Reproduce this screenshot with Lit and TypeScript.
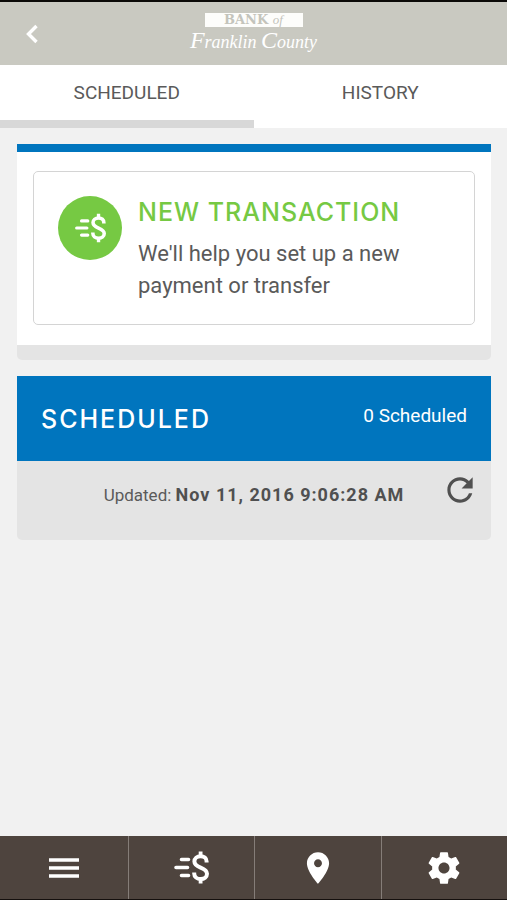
import { LitElement, html, css, svg } from "lit";
import { customElement, state } from "lit/decorators.js";

const transferGlyph = svg`
  <g fill="none" stroke="currentColor">
    <g stroke-width="3.6">
      <path d="M7.5 8.500H14.500M2 16.500H13.500M7.500 24.500H14.500" stroke-linecap="round" />
    </g>
    <path stroke-width="4" d="M32.600 11.500V10.500C32.600 7.200 30 5.200 26.600 5.200C23 5.200 20.400 7.400 20.400 10.400C20.400 13.600 22.800 15 26.600 16.600C30.600 18.200 33 19.600 33 22.800C33 26 30.200 28 26.800 28C23 28 20.200 25.800 20.200 22.400V21.500" />
    <path stroke-width="3.8" d="M26.600 0.500V5.500M26.600 27.500V32.500" />
  </g>`;

@customElement("app-root")
export class AppRoot extends LitElement {
  @state() private tab: "scheduled" | "history" = "scheduled";

  static styles = css`
    :host {
      display: flex;
      flex-direction: column;
      min-height: 100vh;
      box-sizing: border-box;
      border-top: 2px solid #0b0a08;
      border-bottom: 1px solid #15100e;
      background: #f1f1f1;
      color: #5a5a5a;
      font-family: Roboto, "Liberation Sans", sans-serif;
    }
    * {
      box-sizing: border-box;
    }
    button {
      margin: 0;
      padding: 0;
      border: 0;
      background: none;
      color: inherit;
      font: inherit;
      cursor: pointer;
    }
    svg {
      display: block;
    }
    h2 {
      margin: 0;
      font: 500 25px/32px Inter, sans-serif;
      letter-spacing: 1px;
    }
    .bar {
      display: grid;
      grid-template-columns: 64px 1fr 64px;
      align-items: center;
      height: 63px;
      background: #c9c9c1;
      color: #fff;
    }
    .back {
      display: flex;
      justify-content: center;
      align-items: center;
      height: 60px;
    }
    .logo {
      display: flex;
      flex-direction: column;
      align-items: center;
      font-family: "Liberation Serif", serif;
      white-space: nowrap;
    }
    .plate {
      width: 98px;
      height: 14px;
      background: #fdfdfb;
      color: #c4c4bc;
      font: 700 13px/14px "DejaVu Serif", serif;
      text-align: center;
    }
    .plate i {
      font: italic 400 13px/14px "Liberation Serif", serif;
    }
    .script {
      font-size: 18px;
      line-height: 26px;
      font-style: italic;
    }
    .script b {
      font-size: 24px;
      font-weight: 400;
    }
    .tabs {
      display: grid;
      grid-template-columns: 1fr 1fr;
      background: #fff;
    }
    .tab {
      height: 63px;
      border-bottom: 8px solid transparent;
      font-size: 19px;
      line-height: 56px;
    }
    .tab.on {
      border-bottom-color: #d8d8d8;
    }
    main {
      flex: 1;
      display: flex;
      flex-direction: column;
      gap: 16px;
      padding: 16px 16px 16px 17px;
    }
    .card {
      border-radius: 0 0 5px 5px;
      background: #e4e4e4;
      overflow: hidden;
    }
    .body {
      padding: 19px 16px 20px;
      border-top: 8px solid #0075be;
      background: #fff;
    }
    .foot {
      height: 15px;
    }
    .new {
      display: flex;
      gap: 16px;
      width: 100%;
      padding: 24px 24px 22px;
      border: 1px solid #d4d4d4;
      border-radius: 5px;
      text-align: left;
    }
    .disc {
      flex: none;
      display: flex;
      justify-content: center;
      align-items: center;
      width: 64px;
      height: 64px;
      border-radius: 50%;
      background: #76c943;
      color: #fff;
    }
    .new h2 {
      color: #76c943;
    }
    .copy {
      display: block;
    }
    .new p {
      margin: 10px 0 0;
      font-size: 22px;
      line-height: 32px;
    }
    .head {
      display: flex;
      justify-content: space-between;
      align-items: center;
      height: 85px;
      padding: 0 24px;
      background: #0075be;
      color: #fff;
    }
    .head h2 {
      letter-spacing: 2px;
    }
    .count {
      font-size: 19px;
      line-height: 24px;
      padding-bottom: 6px;
    }
    .status {
      display: grid;
      grid-template-columns: 1fr auto;
      align-items: start;
      height: 79px;
      padding: 10px 12px 0 50px;
      font-size: 17px;
      text-align: center;
    }
    .status p {
      margin: 0;
      line-height: 48px;
    }
    .status b {
      color: #505050;
      font-size: 18px;
      letter-spacing: 1px;
    }
    .dock {
      display: grid;
      grid-template-columns: repeat(4, 1fr);
      height: 63px;
      padding-left: 1px;
      background: #4e443e;
      color: #fff;
    }
    .dock button {
      display: flex;
      justify-content: center;
      align-items: center;
    }
    .dock button + button {
      border-left: 1px solid #857d78;
    }
  `;

  render() {
    return html`
      <header class="bar">
        <button class="back" aria-label="Back">
          <svg width="14" height="20" viewBox="0 0 14 20" fill="none" stroke="currentColor" stroke-width="3.4">
            <path d="M11.5 2L3.5 10L11.5 18" />
          </svg>
        </button>
        <div class="logo">
          <span class="plate">BANK <i>of</i></span>
          <span class="script"><b>F</b>ranklin <b>C</b>ounty</span>
        </div>
      </header>
      <nav class="tabs">
        <button class="tab ${this.tab === "scheduled" ? "on" : ""}" @click=${() => (this.tab = "scheduled")}>SCHEDULED</button>
        <button class="tab ${this.tab === "history" ? "on" : ""}" @click=${() => (this.tab = "history")}>HISTORY</button>
      </nav>
      <main>
        <section class="card">
          <div class="body">
            <button class="new">
              <span class="disc">
                <svg width="32" height="30" viewBox="-1 0 36 33">${transferGlyph}</svg>
              </span>
              <span class="copy">
                <h2>NEW TRANSACTION</h2>
                <p>We'll help you set up a new payment or transfer</p>
              </span>
            </button>
          </div>
          <div class="foot"></div>
        </section>
        <section class="card">
          <div class="head">
            <h2>SCHEDULED</h2>
            <span class="count">0 Scheduled</span>
          </div>
          <div class="status">
            <p>Updated: <b>Nov 11, 2016 9:06:28 AM</b></p>
            <button aria-label="Refresh">
              <svg width="38" height="38" viewBox="0 0 24 24" fill="#505050">
                <path d="M17.65 6.35C16.2 4.9 14.21 4 12 4c-4.42 0-7.99 3.58-7.99 8s3.57 8 7.99 8c3.73 0 6.84-2.55 7.73-6h-2.08c-.82 2.33-3.04 4-5.65 4-3.31 0-6-2.69-6-6s2.69-6 6-6c1.66 0 3.14.69 4.22 1.78L13 11h7V4l-2.35 2.35z" />
              </svg>
            </button>
          </div>
        </section>
      </main>
      <nav class="dock">
        <button aria-label="Menu">
          <svg width="30" height="20" viewBox="0 0 30 20" stroke="currentColor" stroke-width="3.4">
            <path d="M0 2H30M0 10H30M0 18H30" />
          </svg>
        </button>
        <button aria-label="Transfers">
          <svg width="36" height="33" viewBox="-1 0 36 33">${transferGlyph}</svg>
        </button>
        <button aria-label="Locations">
          <svg width="38" height="38" viewBox="0 0 24 24" fill="currentColor">
            <path d="M12 2C8.13 2 5 5.13 5 9c0 5.25 7 13 7 13s7-7.75 7-13c0-3.87-3.13-7-7-7zm0 9.5c-1.38 0-2.5-1.12-2.5-2.5s1.12-2.5 2.5-2.5 2.5 1.12 2.5 2.5-1.12 2.5-2.5 2.5z" />
          </svg>
        </button>
        <button aria-label="Settings">
          <svg width="38" height="38" viewBox="0 0 24 24" fill="currentColor">
            <path d="M19.43 12.98c.04-.32.07-.64.07-.98s-.03-.66-.07-.98l2.11-1.65c.19-.15.24-.42.12-.64l-2-3.46c-.12-.22-.39-.3-.61-.22l-2.49 1c-.52-.4-1.08-.73-1.69-.98l-.38-2.65C14.46 2.18 14.25 2 14 2h-4c-.25 0-.46.18-.49.42l-.38 2.65c-.61.25-1.17.59-1.69.98l-2.49-1c-.23-.09-.49 0-.61.22l-2 3.46c-.13.22-.07.49.12.64l2.11 1.65c-.04.32-.07.65-.07.98s.03.66.07.98l-2.11 1.65c-.19.15-.24.42-.12.64l2 3.46c.12.22.39.3.61.22l2.49-1c.52.4 1.08.73 1.69.98l.38 2.65c.03.24.24.42.49.42h4c.25 0 .46-.18.49-.42l.38-2.65c.61-.25 1.17-.59 1.69-.98l2.49 1c.23.09.49 0 .61-.22l2-3.46c.12-.22.07-.49-.12-.64l-2.11-1.65zM12 15.5c-1.93 0-3.5-1.57-3.5-3.5s1.57-3.5 3.5-3.5 3.5 1.57 3.5 3.5-1.57 3.5-3.5 3.5z" />
          </svg>
        </button>
      </nav>
    `;
  }
}
